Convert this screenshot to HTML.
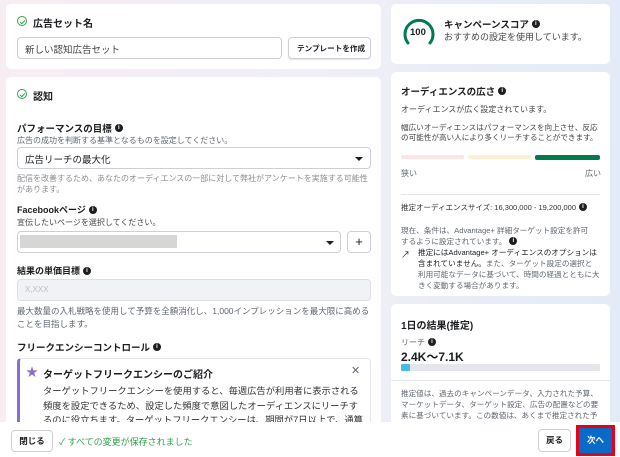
<!DOCTYPE html>
<html><head><meta charset="utf-8"><style>
*{box-sizing:border-box;margin:0;padding:0}
body{width:620px;height:457px;overflow:hidden;position:relative;font-family:"Liberation Sans","Noto Sans CJK JP",sans-serif;color:#1c1e21;background:linear-gradient(90deg,#f6eef3 0%,#efeef6 55%,#e3ebf7 100%);font-size:9px}
.card{position:absolute;background:#fff;border-radius:5px}
.a{position:absolute;white-space:nowrap}
.b{font-weight:bold}
.g{color:#606770}
.lg{color:#8a8d91}
.chk{display:inline-block;width:10px;height:10px;border:1px solid #31a24c;border-radius:50%;position:absolute}
.chk:after{content:"";position:absolute;left:2.5px;top:1.5px;width:2px;height:4px;border:solid #31a24c;border-width:0 1px 1px 0;transform:rotate(45deg)}
.i{display:inline-block;width:8px;height:8px;border-radius:50%;background:#1c1e21;color:#fff;font-size:6px;text-align:center;line-height:8px;font-weight:bold;vertical-align:middle;margin-left:3px;position:relative;top:-1px}
.inp{position:absolute;border:1px solid #ccd0d5;border-radius:4px;background:#fff}
.tri{position:absolute;width:0;height:0;border-left:4px solid transparent;border-right:4px solid transparent;border-top:4px solid #1c1e21}
</style></head><body>

<div class="card" style="left:6px;top:4px;width:375px;height:65px"></div>
<span class="chk" style="left:17px;top:16px"></span>
<div class="a b" style="left:33px;top:15px;font-size:10px">広告セット名</div>
<div class="inp" style="left:17px;top:37px;width:265px;height:22px"></div>
<div class="a" style="left:25px;top:42px;font-size:9.5px;color:#444">新しい認知広告セット</div>
<div class="inp" style="left:288px;top:37px;width:83px;height:22px;box-shadow:0 1px 1px rgba(0,0,0,.1)"></div>
<div class="a b" style="left:297px;top:43px;font-size:7.6px">テンプレートを作成</div>

<div class="card" style="left:6px;top:77px;width:375px;height:360px"></div>
<span class="chk" style="left:17px;top:89px"></span>
<div class="a b" style="left:33px;top:88px;font-size:10px">認知</div>
<div class="a b" style="left:17px;top:121px;font-size:9.5px">パフォーマンスの目標<span class="i">i</span></div>
<div class="a g" style="left:17px;top:135px;font-size:8px">広告の成功を判断する基準となるものを設定してください。</div>
<div class="inp" style="left:17px;top:147px;width:354px;height:22px"></div>
<div class="a" style="left:25px;top:152px;font-size:9.5px">広告リーチの最大化</div>
<div class="tri" style="left:355px;top:157px"></div>
<div class="a lg" style="left:17px;top:173px;font-size:8px;white-space:normal;width:356px;line-height:11px">配信を改善するため、あなたのオーディエンスの一部に対して弊社がアンケートを実施する可能性があります。</div>
<div class="a b" style="left:17px;top:203px;font-size:9px">Facebookページ<span class="i">i</span></div>
<div class="a" style="left:17px;top:217px;font-size:8px;color:#444">宣伝したいページを選択してください。</div>
<div class="inp" style="left:17px;top:231px;width:324px;height:22px"></div>
<div class="a" style="left:20px;top:235px;width:157px;height:13px;background:#d6d6d6"></div>
<div class="tri" style="left:326px;top:241px"></div>
<div class="inp" style="left:347px;top:231px;width:24px;height:22px;text-align:center;line-height:19px;font-size:13px">+</div>
<div class="a b" style="left:17px;top:264px;font-size:9px">結果の単価目標<span class="i">i</span></div>
<div class="a" style="left:17px;top:279px;width:354px;height:22px;background:#f0f2f5;border:1px solid #dddfe2;border-radius:4px"></div>
<div class="a" style="left:25px;top:285px;font-size:8px;color:#bcc0c4">X,XXX</div>
<div class="a g" style="left:17px;top:305px;font-size:8.5px;white-space:normal;width:356px;line-height:13px">最大数量の入札戦略を使用して予算を全額消化し、1,000インプレッションを最大限に高めることを目指します。</div>
<div class="a b" style="left:17px;top:340px;font-size:9.5px">フリークエンシーコントロール<span class="i">i</span></div>
<div class="a" style="left:17px;top:358px;width:354px;height:70px;border:1px solid #e4e6eb;border-left:3px solid #8a6cd8;border-radius:4px;background:#fff"></div>
<div class="a" style="left:26px;top:363px;font-size:12px;color:#8a6cd8">★</div>
<div class="a b" style="left:43px;top:366px;font-size:10px">ターゲットフリークエンシーのご紹介</div>
<div class="a" style="left:351px;top:364px;font-size:11px;color:#606770">✕</div>
<div class="a" style="left:43px;top:384px;font-size:9.3px;white-space:normal;width:322px;line-height:14.5px;color:#333">ターゲットフリークエンシーを使用すると、毎週広告が利用者に表示される頻度を設定できるため、設定した頻度で意図したオーディエンスにリーチするのに役立ちます。ターゲットフリークエンシーは、期間が7日以上で、通算予算を使用し</div>

<div class="card" style="left:391px;top:4px;width:219px;height:60px"></div>
<svg class="a" style="left:401px;top:15px" width="36" height="32" viewBox="0 0 36 32"><path d="M7 28 A14 14 0 1 1 29 28" fill="none" stroke="#007b4e" stroke-width="3" stroke-linecap="round"/></svg>
<div class="a b" style="left:410px;top:27px;font-size:9.5px">100</div>
<div class="a b" style="left:444px;top:17px;font-size:9.5px">キャンペーンスコア<span class="i">i</span></div>
<div class="a" style="left:444px;top:30px;font-size:9px;color:#444">おすすめの設定を使用しています。</div>

<div class="card" style="left:391px;top:72px;width:219px;height:224px"></div>
<div class="a b" style="left:401px;top:84px;font-size:9.5px">オーディエンスの広さ<span class="i">i</span></div>
<div class="a" style="left:401px;top:104px;font-size:8px;color:#444">オーディエンスが広く設定されています。</div>
<div class="a" style="left:401px;top:123px;font-size:7.6px;color:#444;line-height:10px">幅広いオーディエンスはパフォーマンスを向上させ、反応<br>の可能性が高い人により多くリーチすることができます。</div>
<div class="a" style="left:401px;top:155px;width:63px;height:4px;border-radius:2px;background:#fde4e6"></div>
<div class="a" style="left:468px;top:155px;width:63px;height:4px;border-radius:2px;background:#fdf0d5"></div>
<div class="a" style="left:535px;top:155px;width:65px;height:5px;border-radius:2px;background:#007b4e"></div>
<div class="a g" style="left:401px;top:168px;font-size:8px">狭い</div>
<div class="a g" style="left:585px;top:168px;font-size:8px">広い</div>
<div class="a" style="left:401px;top:194px;width:199px;height:1px;background:#e4e6eb"></div>
<div class="a" style="left:401px;top:202px;font-size:7.5px;color:#333">推定オーディエンスサイズ: 16,300,000 - 19,200,000<span class="i">i</span></div>
<div class="a g" style="left:401px;top:225px;font-size:7.6px;line-height:11px">現在、条件は、Advantage+ 詳細ターゲット設定を許可<br>するように設定されています。<span class="i">i</span></div>
<div class="a" style="left:401px;top:248px;font-size:9px">↗</div>
<div class="a g" style="left:418px;top:247px;font-size:7.6px;line-height:11px"><span style="color:#1c1e21">推定にはAdvantage+ オーディエンスのオプションは<br>含まれていません。</span>また、ターゲット設定の選択と<br>利用可能なデータに基づいて、時間の経過とともに大<br>きく変動する場合があります。</div>

<div class="card" style="left:391px;top:304px;width:219px;height:133px"></div>
<div class="a b" style="left:401px;top:317px;font-size:10px">1日の結果(推定)</div>
<div class="a g" style="left:401px;top:337px;font-size:8px">リーチ<span class="i">i</span></div>
<div class="a b" style="left:401px;top:348px;font-size:12px">2.4K～7.1K</div>
<div class="a" style="left:401px;top:364px;width:199px;height:7px;background:#e4e6eb;border-radius:1px"></div>
<div class="a" style="left:401px;top:364px;width:9px;height:7px;background:#45bde9;border-radius:1px"></div>
<div class="a" style="left:391px;top:380px;width:219px;height:1px;background:#e4e6eb"></div>
<div class="a g" style="left:401px;top:388px;font-size:7.6px;line-height:11px">推定値は、過去のキャンペーンデータ、入力された予算、<br>マーケットデータ、ターゲット設定、広告の配置などの要<br>素に基づいています。この数値は、あくまで推定された予</div>

<div class="a" style="left:0;top:422px;width:620px;height:35px;background:#fff"></div>
<div class="a b" style="left:11px;top:430px;width:42px;height:22px;border:1px solid #ccd0d5;border-radius:4px;text-align:center;line-height:20px;font-size:8.5px">閉じる</div>
<div class="a" style="left:59px;top:435px;font-size:9px;color:#31a24c">✓ すべての変更が保存されました</div>
<div class="a b" style="left:538px;top:429px;width:33px;height:23px;border:1px solid #ccd0d5;border-radius:4px;text-align:center;line-height:21px;font-size:8.5px">戻る</div>
<div class="a" style="left:576px;top:425px;width:39px;height:31px;background:#e6001a"></div>
<div class="a b" style="left:579px;top:428px;width:33px;height:25px;background:#0a6ac7;color:#fff;text-align:center;line-height:25px;font-size:8.5px;border-radius:2px">次へ</div>
</body></html>
